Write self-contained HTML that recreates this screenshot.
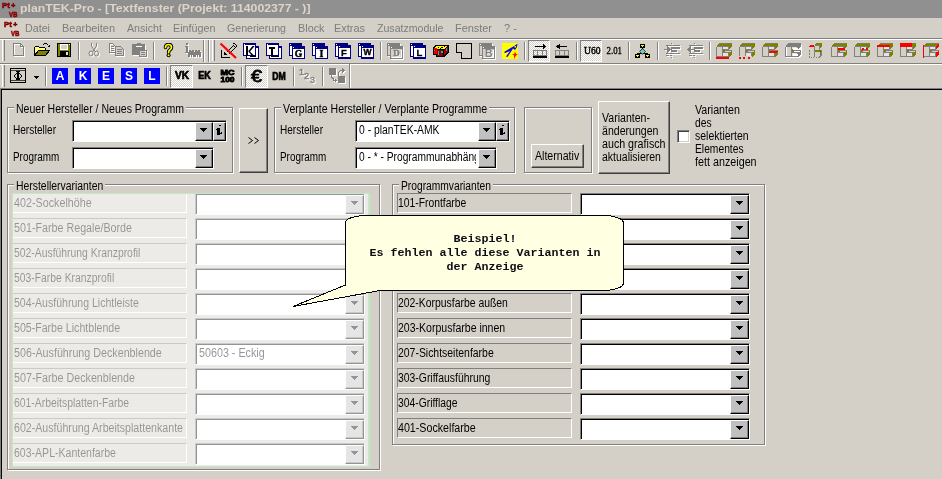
<!DOCTYPE html>
<html>
<head>
<meta charset="utf-8">
<title>planTEK-Pro</title>
<style>
*{box-sizing:border-box;margin:0;padding:0}
html,body{width:942px;height:479px;overflow:hidden;background:#d4d0c8}
body{position:relative;font-family:"Liberation Sans",sans-serif;font-size:12px;color:#000}
.a{position:absolute}
.t{position:absolute;white-space:nowrap;font-size:12px;line-height:14px;height:14px;transform-origin:0 0}
#title{left:0;top:0;width:942px;height:18px;background:#909090}
#title .tt{left:20px;top:1px;font-weight:bold;font-size:11px;line-height:15px;color:#ddd6c8;white-space:nowrap;transform-origin:0 0}
#menu{left:0;top:18px;width:942px;height:19px;background:#d4d0c8}
#menu span{position:absolute;top:3px;font-size:11px;line-height:14px;color:#7c7c7c;white-space:nowrap;transform-origin:0 0}
.hl{position:absolute;height:1px;left:0;width:942px}
.vs{position:absolute;width:2px;border-left:1px solid #808080;border-right:1px solid #fff}
.gb{position:absolute;border:1px solid #808080;box-shadow:1px 1px 0 #fff, inset 1px 1px 0 #fff}
.lg{position:absolute;background:#d4d0c8;white-space:nowrap;font-size:12px;line-height:14px;height:14px;padding:0 0 0 2px;overflow:hidden}
.lg span{display:inline-block;transform-origin:0 0;white-space:nowrap}
.cb{position:absolute;height:22px;background:#fff;border:1px solid;border-color:#808080 #fff #fff #808080;box-shadow:inset 1px 1px 0 #000}
.cb .dd{position:absolute;right:0;top:1px;width:18px;height:19px;background:#c0c0c0;border:1px solid;border-color:#fff #000 #000 #fff;border-width:1px 1px 1px 1px;box-shadow:inset -1px -1px 0 #808080}
.cb .dd:after{content:"";position:absolute;left:4px;top:5px;width:7px;height:4px;background:#000;clip-path:polygon(0 0,7px 0,7px 1px,6px 1px,6px 2px,5px 2px,5px 3px,4px 3px,4px 4px,3px 4px,3px 3px,2px 3px,2px 2px,1px 2px,1px 1px,0 1px)}
.cb .ib{position:absolute;right:0;top:1px;width:13px;height:19px;background:#c0c0c0;border:1px solid;border-color:#fff #000 #000 #fff;box-shadow:inset -1px -1px 0 #808080}
.cb .ib svg{position:absolute;left:1px;top:2px}
.cb.wi .dd{right:13px}
.cb.r .dd{width:19px}
.cb.r .dd:after{left:5px}
.cb:before{content:"";position:absolute;left:1px;right:0;top:0;height:1px;background:#000}
.cb .tx{position:absolute;left:3px;top:2px;font-size:12px;line-height:14px;white-space:nowrap;transform-origin:0 0}
.cb .clip{position:absolute;left:3px;top:2px;width:117px;height:14px;overflow:hidden}
.btn{position:absolute;background:#d4d0c8;border:1px solid;border-color:#fff #404040 #404040 #fff;box-shadow:inset -1px -1px 0 #808080}
.chk{width:13px;height:13px;background:#fff;border:1px solid;border-color:#808080 #fff #fff #808080;box-shadow:inset 1px 1px 0 #404040,inset -1px -1px 0 #d4d0c8}
.lb{position:absolute;height:20px;border:1px solid;border-color:#808080 #fff #fff #808080}
.lb span{position:absolute;left:0;top:2px;font-size:12px;line-height:14px;white-space:nowrap;transform-origin:0 0}
.lb.h span{left:1px}
#wash{position:absolute;left:12px;top:193px;width:358px;height:274px;background:rgba(255,255,255,.58);border:1px solid #c4e8c4;border-right-width:2px}
.co{position:absolute;left:346.5px;width:277px;text-align:center;font:bold 11.67px/14px "Liberation Mono",monospace;color:#0c0c14;white-space:nowrap}
.pb{position:absolute;border:1px solid;border-color:#808080 #fff #fff #808080;background:repeating-conic-gradient(#fff 0 25%,#d4d0c8 0 50%) 0 0/2px 2px}
.bl{position:absolute;width:16px;height:16px;background:#0000ff;color:#fff;font:bold 12px/16px "Liberation Sans",sans-serif;text-align:center}
#form,#menu,#title,#tb1,#tb2{will-change:transform}
</style>
</head>
<body>
<div id="title" class="a"><div class="tt a" id="tt" style="transform:scaleX(1.1138);">planTEK-Pro - [Textfenster (Projekt: 114002377 - )]</div></div>
<div id="menu" class="a"><span id="m0" style="left:25px;transform:scaleX(0.9732);">Datei</span><span id="m1" style="left:62px;transform:scaleX(0.9959);">Bearbeiten</span><span id="m2" style="left:127px;transform:scaleX(0.9673);">Ansicht</span><span id="m3" style="left:173px;transform:scaleX(0.9784);">Einfügen</span><span id="m4" style="left:227px;transform:scaleX(0.9647);">Generierung</span><span id="m5" style="left:298px;transform:scaleX(0.9849);">Block</span><span id="m6" style="left:334px;transform:scaleX(0.9940);">Extras</span><span id="m7" style="left:377px;transform:scaleX(0.9625);">Zusatzmodule</span><span id="m8" style="left:455px;transform:scaleX(0.9920);">Fenster</span><span id="m9" style="left:504px;">? -</span></div>
<svg class="a" style="left:1px;top:1px" width="18" height="17" viewBox="0 0 18 17"><g font-family="Liberation Sans" font-weight="bold" fill="#d80000" stroke="#700000" stroke-width="0.6"><text x="1" y="6.5" font-size="8" textLength="8" lengthAdjust="spacingAndGlyphs">Pt</text><text x="10.2" y="7" font-size="7">+</text><text x="8" y="15.5" font-size="8" textLength="8.5" lengthAdjust="spacingAndGlyphs">VB</text></g></svg>
<svg class="a" style="left:3px;top:20px" width="18" height="17" viewBox="0 0 18 17"><g font-family="Liberation Sans" font-weight="bold" fill="#d80000" stroke="#700000" stroke-width="0.6"><text x="1" y="6.5" font-size="8" textLength="8" lengthAdjust="spacingAndGlyphs">Pt</text><text x="10.2" y="7" font-size="7">+</text><text x="8" y="15.5" font-size="8" textLength="8.5" lengthAdjust="spacingAndGlyphs">VB</text></g></svg>
<div class="hl" style="top:38px;background:#808080"></div>
<div class="hl" style="top:39px;background:#fff"></div>
<div class="hl" style="top:63px;background:#808080"></div>
<div class="hl" style="top:64px;background:#fff"></div>
<div class="hl" style="top:88px;background:#808080"></div>
<div class="hl" style="top:89px;background:#000;left:1px"></div>
<div class="a" style="left:0;top:88px;width:1px;height:391px;background:#808080"></div>
<div class="a" style="left:1px;top:89px;width:1px;height:390px;background:#000"></div>
<div id="tb1" class="a" style="left:0;top:0;width:942px;height:0"><div class="a" style="left:2px;top:40px;width:3px;height:21px;border-left:1px solid #fff;border-right:1px solid #808080"></div>
<div class="vs" style="left:203px;top:40px;height:22px"></div>
<div class="vs" style="left:208px;top:40px;height:22px"></div>
<div class="a" style="left:212px;top:40px;width:3px;height:21px;border-left:1px solid #fff;border-right:1px solid #808080"></div>
<div class="vs" style="left:78px;top:42px;height:18px"></div>
<div class="vs" style="left:153px;top:42px;height:18px"></div>
<div class="vs" style="left:380px;top:42px;height:18px"></div>
<div class="vs" style="left:524px;top:42px;height:18px"></div>
<div class="vs" style="left:576px;top:42px;height:18px"></div>
<div class="vs" style="left:628px;top:42px;height:18px"></div>
<div class="vs" style="left:657px;top:42px;height:18px"></div>
<div class="vs" style="left:709px;top:42px;height:18px"></div>
<svg class="a" style="left:13px;top:43px" width="13" height="15" viewBox="0 0 13 15" shape-rendering="crispEdges"><g transform="translate(1,1)"><path d="M0.5 0.5H7.5L10.5 3.5V12.5H0.5ZM7.5 0.5V3.5H10.5" fill="none" stroke="#fff" stroke-width="1"/></g><path d="M0.5 0.5H7.5L10.5 3.5V12.5H0.5ZM7.5 0.5V3.5H10.5" fill="none" stroke="#808080" stroke-width="1"/></svg>
<svg class="a" style="left:34px;top:42px" width="17" height="15" viewBox="0 0 17 15" shape-rendering="crispEdges"><path d="M8.5 3.5L9.5 2.5L10.5 1.5H12.5L14.5 3.5" fill="none" stroke="#000" stroke-width="1"/><path d="M13 5H16V2Z" fill="#000"/><path d="M0.5 13.5V5.5L1.5 4.5H4.5L5.5 5.5H10.5L11.5 6.5V13.5Z" fill="#ffff80" stroke="#000" stroke-width="1"/><path d="M0.5 13.5L4.5 8.5H15.5L11.5 13.5Z" fill="#808000" stroke="#000" stroke-width="1"/></svg>
<svg class="a" style="left:57px;top:43px" width="14" height="14" viewBox="0 0 14 14" shape-rendering="crispEdges"><rect x="0" y="0" width="14" height="14" fill="#000"/><rect x="1" y="1" width="12" height="12" fill="#808000"/><rect x="3" y="1" width="8" height="6" fill="#fff"/><rect x="4" y="2" width="6" height="4" fill="#d4d0c8"/><rect x="12" y="1" width="1" height="1" fill="#fff"/><rect x="3" y="8" width="9" height="5" fill="#000"/><rect x="9" y="9" width="2" height="3" fill="#e0e0e0"/></svg>
<svg class="a" style="left:88px;top:43px" width="13" height="15" viewBox="0 0 13 15"><g transform="translate(1,1)"><path d="M3.5 0V3L7.5 9M8.5 0V3L4.5 9" fill="none" stroke="#fff" stroke-width="1"/><ellipse cx="3" cy="10.5" rx="2" ry="2.5" fill="none" stroke="#fff"/><ellipse cx="8.5" cy="10.5" rx="2" ry="2.5" fill="none" stroke="#fff"/></g><path d="M3.5 0V3L7.5 9M8.5 0V3L4.5 9" fill="none" stroke="#808080" stroke-width="1"/><ellipse cx="3" cy="10.5" rx="2" ry="2.5" fill="none" stroke="#808080"/><ellipse cx="8.5" cy="10.5" rx="2" ry="2.5" fill="none" stroke="#808080"/></svg>
<svg class="a" style="left:109px;top:43px" width="16" height="14" viewBox="0 0 16 14" shape-rendering="crispEdges"><g transform="translate(1,1)"><path d="M0.5 0.5H3.5L6.5 3.5V9.5H0.5Z" fill="none" stroke="#fff" stroke-width="1"/><rect x="2" y="3" width="3" height="1" fill="#fff"/><rect x="2" y="5" width="3" height="1" fill="#fff"/><rect x="2" y="7" width="3" height="1" fill="#fff"/><path d="M6.5 3.5H11.5L14.5 6.5V12.5H6.5Z" fill="none" stroke="#fff" stroke-width="1"/><rect x="8" y="6" width="5" height="1" fill="#fff"/><rect x="8" y="8" width="5" height="1" fill="#fff"/><rect x="8" y="10" width="5" height="1" fill="#fff"/></g><path d="M0.5 0.5H3.5L6.5 3.5V9.5H0.5Z" fill="none" stroke="#808080" stroke-width="1"/><rect x="2" y="3" width="3" height="1" fill="#808080"/><rect x="2" y="5" width="3" height="1" fill="#808080"/><rect x="2" y="7" width="3" height="1" fill="#808080"/><rect x="7" y="4" width="7" height="8" fill="#d4d0c8"/><path d="M6.5 3.5H11.5L14.5 6.5V12.5H6.5Z" fill="none" stroke="#808080" stroke-width="1"/><rect x="8" y="6" width="5" height="1" fill="#808080"/><rect x="8" y="8" width="5" height="1" fill="#808080"/><rect x="8" y="10" width="5" height="1" fill="#808080"/></svg>
<svg class="a" style="left:132px;top:43px" width="16" height="15" viewBox="0 0 16 15" shape-rendering="crispEdges"><rect x="1" y="2" width="13" height="11" fill="#fff"/><rect x="0" y="1" width="13" height="11" rx="1.5" fill="#808080"/><rect x="5" y="0" width="4" height="1" fill="#808080"/><rect x="4" y="3" width="6" height="1" fill="#fff"/><rect x="8" y="8" width="8" height="7" fill="#fff"/><rect x="7" y="7" width="8" height="7" fill="#808080"/><rect x="8" y="8" width="6" height="5" fill="#d4d0c8"/><rect x="9" y="9" width="4" height="1" fill="#808080"/><rect x="9" y="11" width="4" height="1" fill="#808080"/><rect x="13" y="8" width="1" height="1" fill="#fff"/></svg>
<svg class="a" style="left:163px;top:43px" width="12" height="15" viewBox="0 0 12 15"><path d="M2.5 4.5Q2.5 1.5 5.5 1.5Q8.5 1.5 8.5 4.2Q8.5 6 6.5 7.2Q5.6 7.9 5.6 9.6" fill="none" stroke="#000" stroke-width="3.6" stroke-linecap="round"/><circle cx="5.6" cy="12.3" r="2" fill="#000"/><path d="M2.5 4.5Q2.5 1.5 5.5 1.5Q8.5 1.5 8.5 4.2Q8.5 6 6.5 7.2Q5.6 7.9 5.6 9.6" fill="none" stroke="#ffff00" stroke-width="1.7" stroke-linecap="round"/><circle cx="5.6" cy="12.3" r="1.05" fill="#ffff00"/></svg>
<svg class="a" style="left:185px;top:43px" width="17" height="16" viewBox="0 0 17 16" shape-rendering="crispEdges"><g transform="translate(1,1)"><rect x="1" y="0" width="2" height="2" fill="#fff"/><rect x="0" y="3" width="3" height="1" fill="#fff"/><rect x="1" y="4" width="2" height="5" fill="#fff"/><rect x="0" y="9" width="4" height="1" fill="#fff"/><rect x="4" y="7" width="2" height="1" fill="#fff"/><rect x="7" y="7" width="2" height="1" fill="#fff"/><rect x="4" y="8" width="5" height="1" fill="#fff"/><rect x="3" y="9" width="7" height="3" fill="#fff"/><rect x="3" y="12" width="2" height="2" fill="#fff"/><rect x="6" y="12" width="1" height="2" fill="#fff"/><rect x="8" y="12" width="2" height="2" fill="#fff"/><rect x="10" y="7" width="2" height="1" fill="#fff"/><rect x="13" y="7" width="2" height="1" fill="#fff"/><rect x="10" y="8" width="5" height="1" fill="#fff"/><rect x="9" y="9" width="7" height="3" fill="#fff"/><rect x="9" y="12" width="2" height="2" fill="#fff"/><rect x="12" y="12" width="1" height="2" fill="#fff"/><rect x="14" y="12" width="2" height="2" fill="#fff"/></g><rect x="1" y="0" width="2" height="2" fill="#808080"/><rect x="0" y="3" width="3" height="1" fill="#808080"/><rect x="1" y="4" width="2" height="5" fill="#808080"/><rect x="0" y="9" width="4" height="1" fill="#808080"/><rect x="4" y="7" width="2" height="1" fill="#808080"/><rect x="7" y="7" width="2" height="1" fill="#808080"/><rect x="4" y="8" width="5" height="1" fill="#808080"/><rect x="3" y="9" width="7" height="3" fill="#808080"/><rect x="3" y="12" width="2" height="2" fill="#808080"/><rect x="6" y="12" width="1" height="2" fill="#808080"/><rect x="8" y="12" width="2" height="2" fill="#808080"/><rect x="10" y="7" width="2" height="1" fill="#808080"/><rect x="13" y="7" width="2" height="1" fill="#808080"/><rect x="10" y="8" width="5" height="1" fill="#808080"/><rect x="9" y="9" width="7" height="3" fill="#808080"/><rect x="9" y="12" width="2" height="2" fill="#808080"/><rect x="12" y="12" width="1" height="2" fill="#808080"/><rect x="14" y="12" width="2" height="2" fill="#808080"/></svg>
<svg class="a" style="left:219px;top:42px" width="19" height="18" viewBox="0 0 19 18" shape-rendering="crispEdges"><rect x="2" y="8" width="1" height="8" fill="#000"/><rect x="2" y="15" width="9" height="1" fill="#000"/><path d="M5 13V10L8 13Z" fill="#000"/><path d="M7.5 10.5L14.5 3.5L16.5 5.5L9.5 12.5M13.5 2.5L15 1L18 4L16.5 5.5" fill="none" stroke="#000" stroke-width="1"/><path d="M1.5 1.5L17 16" stroke="#ff0000" stroke-width="2.2" shape-rendering="auto"/></svg>
<svg class="a" style="left:243px;top:43px" width="16" height="16" viewBox="0 0 16 16"><rect shape-rendering="crispEdges" x="3" y="3" width="13" height="13" fill="#000080"/><rect shape-rendering="crispEdges" x="4" y="5" width="11" height="10" fill="#fff"/><rect shape-rendering="crispEdges" x="4" y="4" width="1" height="1" fill="#fff"/><rect shape-rendering="crispEdges" x="0" y="0" width="13" height="13" fill="#000080"/><rect shape-rendering="crispEdges" x="1" y="2" width="11" height="10" fill="#fff"/><rect shape-rendering="crispEdges" x="1" y="1" width="1" height="1" fill="#fff"/><path d="M3 3h2v10h-2zM5.2 8.2L9.5 3h2.2L7 8.6L12 13.5H9.6Z" fill="#000"/><rect shape-rendering="crispEdges" x="7" y="13" width="6" height="1" fill="#000"/></svg>
<svg class="a" style="left:266px;top:43px" width="16" height="16" viewBox="0 0 16 16"><rect shape-rendering="crispEdges" x="3" y="3" width="13" height="13" fill="#000080"/><rect shape-rendering="crispEdges" x="4" y="5" width="11" height="10" fill="#fff"/><rect shape-rendering="crispEdges" x="4" y="4" width="1" height="1" fill="#fff"/><rect shape-rendering="crispEdges" x="0" y="0" width="13" height="13" fill="#000080"/><rect shape-rendering="crispEdges" x="1" y="2" width="11" height="10" fill="#fff"/><rect shape-rendering="crispEdges" x="1" y="1" width="1" height="1" fill="#fff"/><rect shape-rendering="crispEdges" x="3" y="4" width="6" height="2" fill="#000"/><rect shape-rendering="crispEdges" x="5" y="4" width="2" height="10" fill="#000"/><rect shape-rendering="crispEdges" x="7" y="13" width="6" height="1" fill="#000"/></svg>
<svg class="a" style="left:289px;top:43px" width="16" height="16" viewBox="0 0 16 16"><rect shape-rendering="crispEdges" x="0" y="0" width="13" height="13" fill="#000080"/><rect shape-rendering="crispEdges" x="1" y="3" width="2" height="9" fill="#fff"/><rect shape-rendering="crispEdges" x="1" y="1" width="1" height="1" fill="#fff"/><rect shape-rendering="crispEdges" x="3" y="3" width="13" height="13" fill="#000080"/><rect shape-rendering="crispEdges" x="4" y="6" width="11" height="9" fill="#fff"/><rect shape-rendering="crispEdges" x="4" y="4" width="1" height="1" fill="#fff"/><text x="9.5" y="14" font-family="Liberation Serif" font-weight="bold" font-size="9.5" fill="#000" text-anchor="middle" stroke="#000" stroke-width="0.5">G</text></svg>
<svg class="a" style="left:312px;top:43px" width="16" height="16" viewBox="0 0 16 16"><rect shape-rendering="crispEdges" x="0" y="0" width="13" height="13" fill="#000080"/><rect shape-rendering="crispEdges" x="1" y="3" width="2" height="9" fill="#fff"/><rect shape-rendering="crispEdges" x="1" y="1" width="1" height="1" fill="#fff"/><rect shape-rendering="crispEdges" x="3" y="3" width="13" height="13" fill="#000080"/><rect shape-rendering="crispEdges" x="4" y="6" width="11" height="9" fill="#fff"/><rect shape-rendering="crispEdges" x="4" y="4" width="1" height="1" fill="#fff"/><text x="9.5" y="14.2" font-family="Liberation Serif" font-weight="bold" font-size="10" fill="#000" text-anchor="middle" stroke="#000" stroke-width="0.4">I</text></svg>
<svg class="a" style="left:335px;top:43px" width="16" height="16" viewBox="0 0 16 16"><rect shape-rendering="crispEdges" x="0" y="0" width="13" height="14" fill="#000080"/><rect shape-rendering="crispEdges" x="1" y="3" width="2" height="10" fill="#fff"/><rect shape-rendering="crispEdges" x="1" y="1" width="1" height="1" fill="#fff"/><rect shape-rendering="crispEdges" x="3" y="2" width="13" height="14" fill="#000080"/><rect shape-rendering="crispEdges" x="4" y="5" width="11" height="9" fill="#fff"/><rect shape-rendering="crispEdges" x="4" y="3" width="1" height="1" fill="#fff"/><text x="9" y="12.5" font-family="Liberation Sans" font-weight="bold" font-size="9.5" fill="#000" text-anchor="middle" stroke="#000" stroke-width="0.3">F</text></svg>
<svg class="a" style="left:358px;top:43px" width="16" height="16" viewBox="0 0 16 16"><rect shape-rendering="crispEdges" x="0" y="0" width="13" height="14" fill="#000080"/><rect shape-rendering="crispEdges" x="1" y="3" width="2" height="10" fill="#fff"/><rect shape-rendering="crispEdges" x="1" y="1" width="1" height="1" fill="#fff"/><rect shape-rendering="crispEdges" x="3" y="2" width="13" height="14" fill="#000080"/><rect shape-rendering="crispEdges" x="4" y="5" width="11" height="9" fill="#fff"/><rect shape-rendering="crispEdges" x="4" y="3" width="1" height="1" fill="#fff"/><text x="9.5" y="12.2" font-family="Liberation Sans" font-weight="bold" font-size="8.5" fill="#000" text-anchor="middle" stroke="#000" stroke-width="0.4">W</text></svg>
<svg class="a" style="left:387px;top:43px" width="17" height="17" viewBox="0 0 17 17"><g transform="translate(1,1)"><rect shape-rendering="crispEdges" x="0" y="0" width="13" height="13" fill="#fff"/><rect shape-rendering="crispEdges" x="3" y="3" width="13" height="13" fill="#fff"/></g><rect shape-rendering="crispEdges" x="0" y="0" width="13" height="13" fill="#808080"/><rect shape-rendering="crispEdges" x="1" y="3" width="2" height="9" fill="#d4d0c8"/><rect shape-rendering="crispEdges" x="3" y="3" width="13" height="13" fill="#808080"/><rect shape-rendering="crispEdges" x="4" y="6" width="11" height="9" fill="#d4d0c8"/><rect shape-rendering="crispEdges" x="1" y="1" width="1" height="1" fill="#fff"/><rect shape-rendering="crispEdges" x="4" y="4" width="1" height="1" fill="#fff"/><rect shape-rendering="crispEdges" x="5" y="7" width="10" height="8" fill="#fff"/><rect shape-rendering="crispEdges" x="4" y="6" width="10" height="8" fill="#d4d0c8"/><text x="10.3" y="13.8" font-family="Liberation Serif" font-weight="bold" font-size="9" fill="#fff" text-anchor="middle">D</text><text x="9.5" y="13" font-family="Liberation Serif" font-weight="bold" font-size="9" fill="#808080" text-anchor="middle" stroke="#808080" stroke-width="0.4">D</text></svg>
<svg class="a" style="left:410px;top:43px" width="16" height="16" viewBox="0 0 16 16"><rect shape-rendering="crispEdges" x="0" y="0" width="13" height="14" fill="#000080"/><rect shape-rendering="crispEdges" x="1" y="3" width="2" height="10" fill="#fff"/><rect shape-rendering="crispEdges" x="1" y="1" width="1" height="1" fill="#fff"/><rect shape-rendering="crispEdges" x="3" y="2" width="13" height="14" fill="#000080"/><rect shape-rendering="crispEdges" x="4" y="5" width="11" height="9" fill="#fff"/><rect shape-rendering="crispEdges" x="4" y="3" width="1" height="1" fill="#fff"/><text x="9.5" y="12.5" font-family="Liberation Sans" font-weight="bold" font-size="9.5" fill="#000" text-anchor="middle" stroke="#000" stroke-width="0.3">L</text></svg>
<svg class="a" style="left:432px;top:44px" width="17" height="14" viewBox="0 0 17 14" shape-rendering="crispEdges"><path d="M3 1H17V8L12 13H4V11H1V3Z" fill="#000"/><path d="M4 2H15L12 5H2Z" fill="#ffff00"/><rect x="6" y="3" width="1" height="1" fill="#000"/><rect x="9" y="3" width="2" height="1" fill="#000"/><rect x="12" y="2" width="1" height="1" fill="#000"/><rect x="8" y="4" width="1" height="1" fill="#000"/><rect x="2" y="4" width="3" height="6" fill="#ff0000"/><rect x="2" y="6" width="1" height="1" fill="#00c0c0"/><rect x="3" y="5" width="1" height="2" fill="#900"/><rect x="3" y="8" width="1" height="1" fill="#900"/><rect x="5" y="6" width="6" height="6" fill="#900000"/><rect x="6" y="7" width="1" height="4" fill="#00c0c0"/><rect x="9" y="7" width="2" height="2" fill="#00c0c0"/><path d="M12 6L16 2V7L12 11Z" fill="#a00000"/><rect x="14" y="4" width="1" height="3" fill="#00c0c0"/></svg>
<svg class="a" style="left:456px;top:43px" width="16" height="16" viewBox="0 0 16 16" shape-rendering="crispEdges"><path d="M0.5 0.5H15.5V15.5H5.5V9.5H0.5Z" fill="none" stroke="#000" stroke-width="1"/></svg>
<svg class="a" style="left:479px;top:43px" width="17" height="17" viewBox="0 0 17 17"><g transform="translate(1,1)"><rect shape-rendering="crispEdges" x="0" y="0" width="13" height="13" fill="#fff"/><rect shape-rendering="crispEdges" x="3" y="3" width="13" height="13" fill="#fff"/></g><rect shape-rendering="crispEdges" x="0" y="0" width="13" height="13" fill="#808080"/><rect shape-rendering="crispEdges" x="1" y="3" width="2" height="9" fill="#d4d0c8"/><rect shape-rendering="crispEdges" x="3" y="3" width="13" height="13" fill="#808080"/><rect shape-rendering="crispEdges" x="4" y="6" width="11" height="9" fill="#d4d0c8"/><rect shape-rendering="crispEdges" x="1" y="1" width="1" height="1" fill="#fff"/><rect shape-rendering="crispEdges" x="4" y="4" width="1" height="1" fill="#fff"/><rect shape-rendering="crispEdges" x="5" y="7" width="10" height="8" fill="#fff"/><rect shape-rendering="crispEdges" x="4" y="6" width="10" height="8" fill="#d4d0c8"/><text x="10.5" y="14.8" font-family="Liberation Sans" font-weight="bold" font-size="10.5" fill="#fff" text-anchor="middle">B</text><text x="9.7" y="14" font-family="Liberation Sans" font-weight="bold" font-size="10.5" fill="#808080" text-anchor="middle">B</text></svg>
<svg class="a" style="left:502px;top:43px" width="16" height="16" viewBox="0 0 16 16" shape-rendering="crispEdges"><rect x="0" y="0" width="16" height="16" fill="#ffff00"/><g shape-rendering="auto"><path d="M15.5 0.5L13 2.5L2 9L3 10L8 8L4 13.5L5.5 14L11 5.5L13 7L15 4Z" fill="#0000ff"/><rect x="12.5" y="3" width="1.5" height="1.5" fill="#ffff00"/><path d="M13 8.5L14 11L16 11.5L14 12.5L12 16L12.2 12.5L10 11.5L12.2 11Z" fill="#ff0000"/></g></svg>
<div class="pb" style="left:528px;top:40px;width:22px;height:22px"></div>
<svg class="a" style="left:528px;top:40px" width="22" height="22" viewBox="0 0 22 22" shape-rendering="crispEdges"><path d="M5.5 10.5H18.5V15.5H5.5ZM9.5 10.5V15.5M14.5 10.5V15.5" fill="none" stroke="#808080" stroke-width="1"/><rect x="5" y="16" width="14" height="2" fill="#000"/><rect x="7" y="6" width="11" height="1" fill="#000"/><path d="M15 4L18.5 6.5L15 9Z" fill="#000"/></svg>
<svg class="a" style="left:550px;top:40px" width="22" height="22" viewBox="0 0 22 22" shape-rendering="crispEdges"><path d="M5.5 10.5H18.5V15.5H5.5ZM9.5 10.5V15.5M14.5 10.5V15.5" fill="none" stroke="#808080" stroke-width="1"/><rect x="5" y="16" width="14" height="2" fill="#000"/><rect x="6" y="6" width="11" height="1" fill="#000"/><path d="M9.5 4L6 6.5L9.5 9Z" fill="#000"/></svg>
<div class="pb" style="left:580px;top:40px;width:22px;height:22px"></div>
<svg class="a" style="left:580px;top:40px" width="46" height="22" viewBox="0 0 46 22"><text x="4" y="13.6" font-family="Liberation Serif" font-weight="normal" font-size="10.5" fill="#000" text-anchor="start" stroke="#000" stroke-width="0.45" textLength="16.5" lengthAdjust="spacingAndGlyphs">U60</text><text x="26.5" y="13.6" font-family="Liberation Serif" font-weight="normal" font-size="10.5" fill="#000" text-anchor="start" stroke="#000" stroke-width="0.3" textLength="15.5" lengthAdjust="spacingAndGlyphs">2.01</text></svg>
<svg class="a" style="left:635px;top:44px" width="16" height="14" viewBox="0 0 16 14" shape-rendering="crispEdges"><rect x="5" y="0" width="5" height="4" fill="#000"/><rect x="6" y="1" width="3" height="2" fill="#ffff00"/><rect x="6" y="2" width="1" height="1" fill="#000"/><rect x="8" y="2" width="1" height="1" fill="#000"/><rect x="0" y="10" width="5" height="4" fill="#000"/><rect x="1" y="11" width="3" height="2" fill="#ffff00"/><rect x="1" y="12" width="1" height="1" fill="#000"/><rect x="3" y="12" width="1" height="1" fill="#000"/><rect x="10" y="10" width="5" height="4" fill="#000"/><rect x="11" y="11" width="3" height="2" fill="#ffff00"/><rect x="11" y="12" width="1" height="1" fill="#000"/><rect x="13" y="12" width="1" height="1" fill="#000"/><path d="M7.5 4V5M7.5 9.5L2.5 9.5V10M7.5 9.5H12.5V10" fill="none" stroke="#000" stroke-width="1"/><path d="M7.5 4.8L10.2 7.5L7.5 10.2L4.8 7.5Z" fill="#e8ffff" stroke="#000" stroke-width="1" shape-rendering="auto"/><path d="M7.5 6L9 7.5L7.5 9L6 7.5Z" fill="#00e8e8" shape-rendering="auto"/></svg>
<svg class="a" style="left:664px;top:43px" width="18" height="17" viewBox="0 0 18 17" shape-rendering="crispEdges"><g transform="translate(1,1)"><rect x="2" y="2" width="14" height="1" fill="#fff"/><rect x="7" y="4" width="9" height="2" fill="#fff"/><rect x="7" y="7" width="6" height="2" fill="#fff"/><rect x="2" y="10" width="14" height="1" fill="#fff"/><rect x="2" y="12" width="3" height="1" fill="#fff"/><rect x="6" y="12" width="2" height="1" fill="#fff"/><rect x="7" y="0" width="1" height="1" fill="#fff"/><rect x="7" y="2" width="1" height="1" fill="#fff"/><rect x="7" y="4" width="1" height="1" fill="#fff"/><rect x="7" y="6" width="1" height="1" fill="#fff"/><rect x="7" y="8" width="1" height="1" fill="#fff"/><rect x="7" y="10" width="1" height="1" fill="#fff"/><rect x="7" y="12" width="1" height="1" fill="#fff"/><rect x="7" y="14" width="1" height="1" fill="#fff"/><rect x="0" y="6" width="7" height="1" fill="#fff"/><path d="M3 3L7 6.5L3 10Z" fill="#fff"/></g><rect x="2" y="2" width="14" height="1" fill="#808080"/><rect x="7" y="4" width="9" height="2" fill="#808080"/><rect x="7" y="7" width="6" height="2" fill="#808080"/><rect x="2" y="10" width="14" height="1" fill="#808080"/><rect x="2" y="12" width="3" height="1" fill="#808080"/><rect x="6" y="12" width="2" height="1" fill="#808080"/><rect x="7" y="0" width="1" height="1" fill="#808080"/><rect x="7" y="2" width="1" height="1" fill="#808080"/><rect x="7" y="4" width="1" height="1" fill="#808080"/><rect x="7" y="6" width="1" height="1" fill="#808080"/><rect x="7" y="8" width="1" height="1" fill="#808080"/><rect x="7" y="10" width="1" height="1" fill="#808080"/><rect x="7" y="12" width="1" height="1" fill="#808080"/><rect x="7" y="14" width="1" height="1" fill="#808080"/><rect x="0" y="6" width="7" height="1" fill="#808080"/><path d="M3 3L7 6.5L3 10Z" fill="#808080"/></svg>
<svg class="a" style="left:687px;top:43px" width="18" height="17" viewBox="0 0 18 17" shape-rendering="crispEdges"><g transform="translate(1,1)"><rect x="2" y="2" width="14" height="1" fill="#fff"/><rect x="7" y="4" width="9" height="2" fill="#fff"/><rect x="7" y="7" width="6" height="2" fill="#fff"/><rect x="2" y="10" width="14" height="1" fill="#fff"/><rect x="2" y="12" width="3" height="1" fill="#fff"/><rect x="6" y="12" width="2" height="1" fill="#fff"/><rect x="7" y="0" width="1" height="1" fill="#fff"/><rect x="7" y="2" width="1" height="1" fill="#fff"/><rect x="7" y="4" width="1" height="1" fill="#fff"/><rect x="7" y="6" width="1" height="1" fill="#fff"/><rect x="7" y="8" width="1" height="1" fill="#fff"/><rect x="7" y="10" width="1" height="1" fill="#fff"/><rect x="7" y="12" width="1" height="1" fill="#fff"/><rect x="7" y="14" width="1" height="1" fill="#fff"/><rect x="1" y="6" width="6" height="1" fill="#fff"/><path d="M4 3L0 6.5L4 10Z" fill="#fff"/></g><rect x="2" y="2" width="14" height="1" fill="#808080"/><rect x="7" y="4" width="9" height="2" fill="#808080"/><rect x="7" y="7" width="6" height="2" fill="#808080"/><rect x="2" y="10" width="14" height="1" fill="#808080"/><rect x="2" y="12" width="3" height="1" fill="#808080"/><rect x="6" y="12" width="2" height="1" fill="#808080"/><rect x="7" y="0" width="1" height="1" fill="#808080"/><rect x="7" y="2" width="1" height="1" fill="#808080"/><rect x="7" y="4" width="1" height="1" fill="#808080"/><rect x="7" y="6" width="1" height="1" fill="#808080"/><rect x="7" y="8" width="1" height="1" fill="#808080"/><rect x="7" y="10" width="1" height="1" fill="#808080"/><rect x="7" y="12" width="1" height="1" fill="#808080"/><rect x="7" y="14" width="1" height="1" fill="#808080"/><rect x="1" y="6" width="6" height="1" fill="#808080"/><path d="M4 3L0 6.5L4 10Z" fill="#808080"/></svg>
<svg class="a" style="left:716px;top:43px" width="16" height="16" viewBox="0 0 16 16" shape-rendering="crispEdges"><path d="M3 0H16L13 3H0Z" fill="#808000"/><path d="M13 3L16 0V3L13 6Z" fill="#808000"/><path d="M13 9.5L16 7.5V11L13 14Z" fill="#808000"/><rect x="7" y="7" width="2" height="2" fill="#808000"/><rect x="7" y="4" width="5" height="2" fill="#e6e4de"/><rect x="7" y="10" width="5" height="3" fill="#e6e4de"/><path d="M0.5 3.5H12.5V6.5H6.5M6.5 3.5V13.5M0.5 3.5V13.5H12.5V9.5H7M9 7.5H15.5" fill="none" stroke="#808080" stroke-width="1"/><path d="M3 0.5H16M6 3L9 0" fill="none" stroke="#808080" stroke-width="0.6"/><rect x="0" y="14" width="13" height="2" fill="#ff0000"/></svg>
<svg class="a" style="left:739px;top:43px" width="16" height="16" viewBox="0 0 16 16" shape-rendering="crispEdges"><path d="M3 0H16L13 3H0Z" fill="#808000"/><path d="M13 3L16 0V3L13 6Z" fill="#808000"/><path d="M13 9.5L16 7.5V11L13 14Z" fill="#808000"/><rect x="7" y="7" width="2" height="2" fill="#808000"/><rect x="7" y="4" width="5" height="2" fill="#e6e4de"/><rect x="7" y="10" width="5" height="3" fill="#e6e4de"/><path d="M0.5 3.5H12.5V6.5H6.5M6.5 3.5V13.5M0.5 3.5V13.5H12.5V9.5H7M9 7.5H15.5" fill="none" stroke="#808080" stroke-width="1"/><path d="M3 0.5H16M6 3L9 0" fill="none" stroke="#808080" stroke-width="0.6"/><rect x="0" y="13" width="13" height="1" fill="#d4d0c8"/><rect x="0" y="14" width="2" height="2" fill="#ff0000"/><rect x="4" y="14" width="2" height="2" fill="#ff0000"/><rect x="9" y="14" width="2" height="2" fill="#ff0000"/></svg>
<svg class="a" style="left:762px;top:43px" width="16" height="16" viewBox="0 0 16 16" shape-rendering="crispEdges"><path d="M3 0H16L13 3H0Z" fill="#808000"/><path d="M13 3L16 0V3L13 6Z" fill="#808000"/><path d="M13 9.5L16 7.5V11L13 14Z" fill="#808000"/><rect x="7" y="7" width="2" height="2" fill="#808000"/><rect x="7" y="4" width="5" height="2" fill="#e6e4de"/><rect x="7" y="10" width="5" height="3" fill="#e6e4de"/><path d="M0.5 3.5H12.5V6.5H6.5M6.5 3.5V13.5M0.5 3.5V13.5H12.5V9.5H7M9 7.5H15.5" fill="none" stroke="#808080" stroke-width="1"/><path d="M3 0.5H16M6 3L9 0" fill="none" stroke="#808080" stroke-width="0.6"/><path d="M8 8H16L14 10H7Z" fill="#ff0000"/></svg>
<svg class="a" style="left:785px;top:43px" width="17" height="17" viewBox="0 0 17 17" shape-rendering="crispEdges"><g transform="translate(1,1)"><path d="M0 3H13V14H0ZM13 3L16 0V11L13 14Z" fill="#fff"/></g><rect x="1" y="4" width="5" height="9" fill="#d4d0c8"/><path d="M3 0H16L13 3H0Z" fill="#808080"/><path d="M13 3L16 0V3L13 6Z" fill="#808080"/><path d="M13 9.5L16 7.5V11L13 14Z" fill="#808080"/><rect x="7" y="7" width="2" height="2" fill="#808000"/><rect x="7" y="4" width="5" height="2" fill="#e6e4de"/><rect x="7" y="10" width="5" height="3" fill="#e6e4de"/><path d="M0.5 3.5H12.5V6.5H6.5M6.5 3.5V13.5M0.5 3.5V13.5H12.5V9.5H7M9 7.5H15.5" fill="none" stroke="#808080" stroke-width="1"/><path d="M3 0.5H16M6 3L9 0" fill="none" stroke="#808080" stroke-width="0.6"/><rect x="8" y="5" width="5" height="2" fill="#fff"/><rect x="8" y="11" width="5" height="2" fill="#fff"/><rect x="1" y="4" width="1" height="9" fill="#fff"/></svg>
<svg class="a" style="left:808px;top:43px" width="16" height="16" viewBox="0 0 16 16" shape-rendering="crispEdges"><path d="M2 2H6V4H0Z" fill="#ff0000"/><path d="M8 0H14L13 2H7Z" fill="#808000"/><path d="M12 2L14 0V4L12 5Z" fill="#808000"/><rect x="7" y="7" width="6" height="2" fill="#808000"/><rect x="12" y="9" width="1" height="4" fill="#808000"/><rect x="12" y="8" width="1" height="1" fill="#008000"/><path d="M6.5 2.5H11.5V6.5M6.5 2.5V14M13.5 7V12L11 14.5" fill="none" stroke="#808080" stroke-width="1"/><rect x="1" y="7" width="1" height="1" fill="#808080"/><rect x="1" y="8" width="1" height="1" fill="#808080"/><rect x="1" y="10" width="1" height="1" fill="#808080"/><rect x="1" y="11" width="1" height="1" fill="#808080"/><rect x="1" y="13" width="1" height="1" fill="#808080"/><rect x="1" y="14" width="1" height="1" fill="#808080"/><rect x="3" y="14" width="1" height="1" fill="#808080"/><rect x="5" y="14" width="1" height="1" fill="#808080"/><rect x="8" y="14" width="1" height="1" fill="#808080"/><rect x="10" y="14" width="1" height="1" fill="#808080"/></svg>
<svg class="a" style="left:831px;top:43px" width="16" height="16" viewBox="0 0 16 16" shape-rendering="crispEdges"><path d="M3 0H16L13 3H0Z" fill="#808000"/><path d="M13 3L16 0V3L13 6Z" fill="#808000"/><path d="M13 9.5L16 7.5V11L13 14Z" fill="#808000"/><rect x="7" y="7" width="2" height="2" fill="#808000"/><rect x="7" y="4" width="5" height="2" fill="#e6e4de"/><rect x="7" y="10" width="5" height="3" fill="#e6e4de"/><path d="M0.5 3.5H12.5V6.5H6.5M6.5 3.5V13.5M0.5 3.5V13.5H12.5V9.5H7M9 7.5H15.5" fill="none" stroke="#808080" stroke-width="1"/><path d="M3 0.5H16M6 3L9 0" fill="none" stroke="#808080" stroke-width="0.6"/><rect x="7" y="5" width="7" height="2" fill="#ff0000"/></svg>
<svg class="a" style="left:854px;top:43px" width="16" height="16" viewBox="0 0 16 16" shape-rendering="crispEdges"><path d="M3 0H16L13 3H0Z" fill="#808000"/><path d="M13 3L16 0V3L13 6Z" fill="#808000"/><path d="M13 9.5L16 7.5V11L13 14Z" fill="#808000"/><rect x="7" y="7" width="2" height="2" fill="#808000"/><rect x="7" y="4" width="5" height="2" fill="#e6e4de"/><rect x="7" y="10" width="5" height="3" fill="#e6e4de"/><path d="M0.5 3.5H12.5V6.5H6.5M6.5 3.5V13.5M0.5 3.5V13.5H12.5V9.5H7M9 7.5H15.5" fill="none" stroke="#808080" stroke-width="1"/><path d="M3 0.5H16M6 3L9 0" fill="none" stroke="#808080" stroke-width="0.6"/><rect x="8" y="5" width="2" height="2" fill="#ff0000"/><rect x="12" y="5" width="2" height="2" fill="#ff0000"/></svg>
<svg class="a" style="left:877px;top:43px" width="16" height="16" viewBox="0 0 16 16" shape-rendering="crispEdges"><path d="M3 0H16L13 3H0Z" fill="#808000"/><path d="M13 3L16 0V3L13 6Z" fill="#808000"/><path d="M13 9.5L16 7.5V11L13 14Z" fill="#808000"/><rect x="7" y="7" width="2" height="2" fill="#808000"/><rect x="7" y="4" width="5" height="2" fill="#e6e4de"/><rect x="7" y="10" width="5" height="3" fill="#e6e4de"/><path d="M0.5 3.5H12.5V6.5H6.5M6.5 3.5V13.5M0.5 3.5V13.5H12.5V9.5H7M9 7.5H15.5" fill="none" stroke="#808080" stroke-width="1"/><path d="M3 0.5H16M6 3L9 0" fill="none" stroke="#808080" stroke-width="0.6"/><rect x="0" y="2" width="13" height="2" fill="#ff0000"/></svg>
<svg class="a" style="left:900px;top:43px" width="16" height="16" viewBox="0 0 16 16" shape-rendering="crispEdges"><path d="M3 0H16L13 3H0Z" fill="#808000"/><path d="M13 3L16 0V3L13 6Z" fill="#808000"/><path d="M13 9.5L16 7.5V11L13 14Z" fill="#808000"/><rect x="7" y="7" width="2" height="2" fill="#808000"/><rect x="7" y="4" width="5" height="2" fill="#e6e4de"/><rect x="7" y="10" width="5" height="3" fill="#e6e4de"/><path d="M0.5 3.5H12.5V6.5H6.5M6.5 3.5V13.5M0.5 3.5V13.5H12.5V9.5H7M9 7.5H15.5" fill="none" stroke="#808080" stroke-width="1"/><path d="M3 0.5H16M6 3L9 0" fill="none" stroke="#808080" stroke-width="0.6"/><rect x="0" y="0" width="12" height="4" fill="#ff0000"/></svg>
<svg class="a" style="left:923px;top:43px" width="16" height="16" viewBox="0 0 16 16" shape-rendering="crispEdges"><path d="M3 0H16L13 3H0Z" fill="#808000"/><path d="M13 3L16 0V3L13 6Z" fill="#ff0000"/><path d="M13 9.5L16 7.5V11L13 14Z" fill="#ff0000"/><rect x="7" y="7" width="2" height="2" fill="#808000"/><rect x="7" y="4" width="5" height="2" fill="#e6e4de"/><rect x="7" y="10" width="5" height="3" fill="#e6e4de"/><path d="M0.5 3.5H12.5V6.5H6.5M6.5 3.5V13.5M0.5 3.5V13.5H12.5V9.5H7M9 7.5H15.5" fill="none" stroke="#808080" stroke-width="1"/><path d="M3 0.5H16M6 3L9 0" fill="none" stroke="#808080" stroke-width="0.6"/><rect x="0" y="2" width="1" height="13" fill="#ff0000"/></svg>
</div>
<div id="tb2" class="a" style="left:0;top:0;width:942px;height:0"><div class="a" style="left:2px;top:65px;width:3px;height:22px;border-left:1px solid #fff;border-right:1px solid #808080"></div>
<div class="vs" style="left:45px;top:67px;height:19px"></div>
<div class="vs" style="left:166px;top:67px;height:19px"></div>
<div class="vs" style="left:241px;top:67px;height:19px"></div>
<div class="vs" style="left:293px;top:67px;height:19px"></div>
<div class="vs" style="left:322px;top:67px;height:19px"></div>
<div class="vs" style="left:349px;top:64px;height:24px"></div>
<svg class="a" style="left:10px;top:68px" width="16" height="15" viewBox="0 0 16 15" shape-rendering="crispEdges"><path d="M0.5 0.5H15.5V14.5H0.5Z" fill="none" stroke="#000" stroke-width="1"/><rect x="0" y="0" width="16" height="1" fill="#000"/><rect x="0" y="14" width="16" height="1" fill="#000"/><rect x="0" y="0" width="1" height="15" fill="#000"/><rect x="15" y="0" width="1" height="15" fill="#000"/><rect x="1" y="2" width="14" height="1" fill="#404040"/><rect x="1" y="12" width="14" height="1" fill="#404040"/><rect x="7" y="3" width="2" height="9" fill="#000"/><rect x="6" y="3" width="4" height="1" fill="#000"/><rect x="6" y="11" width="4" height="1" fill="#000"/><rect x="6" y="5" width="1" height="1" fill="#000"/><rect x="5" y="6" width="1" height="1" fill="#000"/><rect x="4" y="7" width="1" height="1" fill="#000"/><rect x="4" y="8" width="1" height="1" fill="#000"/><rect x="5" y="9" width="1" height="1" fill="#000"/><rect x="6" y="10" width="1" height="1" fill="#000"/><rect x="9" y="5" width="1" height="1" fill="#000"/><rect x="10" y="6" width="1" height="1" fill="#000"/><rect x="11" y="7" width="1" height="1" fill="#000"/><rect x="11" y="8" width="1" height="1" fill="#000"/><rect x="10" y="9" width="1" height="1" fill="#000"/><rect x="9" y="10" width="1" height="1" fill="#000"/></svg>
<svg class="a" style="left:34px;top:76px" width="5" height="3" viewBox="0 0 5 3" shape-rendering="crispEdges"><rect x="0" y="0" width="5" height="1" fill="#000"/><rect x="1" y="1" width="3" height="1" fill="#000"/><rect x="2" y="2" width="1" height="1" fill="#000"/></svg>
<div class="bl" style="left:52px;top:68px">A</div>
<div class="bl" style="left:75px;top:68px">K</div>
<div class="bl" style="left:98px;top:68px">E</div>
<div class="bl" style="left:121px;top:68px">S</div>
<div class="bl" style="left:144px;top:68px">L</div>
<div class="pb" style="left:170px;top:65px;width:23px;height:23px"></div>
<div class="pb" style="left:245px;top:65px;width:23px;height:23px"></div>
<svg class="a" style="left:170px;top:65px" width="120" height="22" viewBox="0 0 120 22"><text x="12" y="14" font-family="Liberation Sans" font-weight="bold" font-size="10.5" fill="#000" text-anchor="middle" stroke="#000" stroke-width="0.7" textLength="14" lengthAdjust="spacingAndGlyphs">VK</text><text x="34.5" y="14" font-family="Liberation Sans" font-weight="bold" font-size="10.5" fill="#000" text-anchor="middle" stroke="#000" stroke-width="0.7" textLength="12.5" lengthAdjust="spacingAndGlyphs">EK</text><text x="57.5" y="10" font-family="Liberation Sans" font-weight="bold" font-size="8" fill="#000" text-anchor="middle" stroke="#000" stroke-width="0.9" textLength="14" lengthAdjust="spacingAndGlyphs">MC</text><text x="57.5" y="17" font-family="Liberation Sans" font-weight="bold" font-size="8" fill="#000" text-anchor="middle" stroke="#000" stroke-width="0.9" textLength="14" lengthAdjust="spacingAndGlyphs">100</text><text x="86.5" y="16.5" font-family="Liberation Sans" font-weight="normal" font-size="16.5" fill="#000" text-anchor="middle" stroke="#000" stroke-width="0.8" textLength="11" lengthAdjust="spacingAndGlyphs">€</text><text x="109" y="15" font-family="Liberation Sans" font-weight="bold" font-size="10.5" fill="#000" text-anchor="middle" stroke="#000" stroke-width="0.7" textLength="13.5" lengthAdjust="spacingAndGlyphs">DM</text></svg>
<svg class="a" style="left:299px;top:67px" width="20" height="19" viewBox="0 0 20 19"><g transform="translate(1,1)"><text x="0" y="7.5" font-family="Liberation Sans" font-weight="normal" font-size="9" fill="#fff" text-anchor="start" stroke="#fff" stroke-width="0.5">1</text><text x="5" y="12" font-family="Liberation Sans" font-weight="normal" font-size="9" fill="#fff" text-anchor="start" stroke="#fff" stroke-width="0.5">2</text><text x="11" y="16" font-family="Liberation Sans" font-weight="normal" font-size="9" fill="#fff" text-anchor="start" stroke="#fff" stroke-width="0.3">3</text></g><text x="0" y="7.5" font-family="Liberation Sans" font-weight="normal" font-size="9" fill="#808080" text-anchor="start" stroke="#808080" stroke-width="0.5">1</text><text x="5" y="12" font-family="Liberation Sans" font-weight="normal" font-size="9" fill="#808080" text-anchor="start" stroke="#808080" stroke-width="0.5">2</text><text x="11" y="16" font-family="Liberation Sans" font-weight="normal" font-size="9" fill="#808080" text-anchor="start" stroke="#808080" stroke-width="0.3">3</text></svg>
<svg class="a" style="left:329px;top:68px" width="18" height="17" viewBox="0 0 18 17" shape-rendering="crispEdges"><g transform="translate(1,1)"><rect x="0" y="0" width="7" height="7" fill="#fff"/><rect x="9" y="8" width="7" height="7" fill="#fff"/><path d="M2.5 7V9.5L4.5 10.5V12.5H6" fill="none" stroke="#fff" stroke-width="1"/><path d="M6 10.5L8 12.5L6 14.5Z" fill="#fff"/><path d="M9.5 8V4.5L11.5 2.5H13.5" fill="none" stroke="#fff" stroke-width="1"/><path d="M13 0L16 2.5L13 5Z" fill="#fff"/></g><rect x="0" y="0" width="7" height="7" fill="#808080"/><rect x="9" y="8" width="7" height="7" fill="#808080"/><path d="M2.5 7V9.5L4.5 10.5V12.5H6" fill="none" stroke="#808080" stroke-width="1"/><path d="M6 10.5L8 12.5L6 14.5Z" fill="#808080"/><path d="M9.5 8V4.5L11.5 2.5H13.5" fill="none" stroke="#808080" stroke-width="1"/><path d="M13 0L16 2.5L13 5Z" fill="#808080"/></svg>
</div>
<div id="form" class="a" style="left:0;top:0;width:942px;height:479px">
<div class="gb" style="left:7px;top:107px;width:226px;height:66px"></div>
<div class="lg" style="left:14px;top:102px;width:172px"><span id="l1" style="transform:scaleX(0.8777);">Neuer Hersteller / Neues Programm</span></div>
<div class="t" id="h1" style="left:13px;top:123px;transform:scaleX(0.8372);">Hersteller</div>
<div class="t" id="p1" style="left:13px;top:150px;transform:scaleX(0.8248);">Programm</div>
<div class="cb wi" style="left:72px;top:120px;width:155px"><div class="dd"></div><div class="ib"><svg width="8" height="12" viewBox="0 0 8 12" shape-rendering="crispEdges"><path d="M4 0h2v1h-2zM2 3h3v1h-3zM1 4h4v1h-4zM2 5h3v1h-3zM2 6h3v1h-3zM2 7h3v1h-3zM6 7h1v1h-1zM2 8h5v1h-5zM2 9h3v1h-3z" fill="#000"/></svg></div></div>
<div class="cb" style="left:72px;top:147px;width:142px"><div class="dd"></div></div>
<div class="btn" style="left:239px;top:108px;width:29px;height:65px"><svg class="a" style="left:8px;top:28px" width="12" height="8" viewBox="0 0 12 8"><path d="M0.5 0.5L4.5 3.5L0.5 6.5M6.5 0.5L10.5 3.5L6.5 6.5" fill="none" stroke="#000" stroke-width="1"/></svg></div>
<div class="gb" style="left:274px;top:107px;width:241px;height:66px"></div>
<div class="lg" style="left:281px;top:102px;width:208px"><span id="l3" style="transform:scaleX(0.8793);">Verplante Hersteller / Verplante Programme</span></div>
<div class="t" id="h2" style="left:280px;top:123px;transform:scaleX(0.8372);">Hersteller</div>
<div class="t" id="p2" style="left:280px;top:150px;transform:scaleX(0.8248);">Programm</div>
<div class="cb wi" style="left:355px;top:120px;width:155px"><div class="tx" id="c3" style="transform:scaleX(0.8621);">0 - planTEK-AMK</div><div class="dd"></div><div class="ib"><svg width="8" height="12" viewBox="0 0 8 12" shape-rendering="crispEdges"><path d="M4 0h2v1h-2zM2 3h3v1h-3zM1 4h4v1h-4zM2 5h3v1h-3zM2 6h3v1h-3zM2 7h3v1h-3zM6 7h1v1h-1zM2 8h5v1h-5zM2 9h3v1h-3z" fill="#000"/></svg></div></div>
<div class="cb" style="left:355px;top:147px;width:142px"><div class="clip"><div class="tx" id="c4" style="left:0;top:0;transform:scaleX(0.8500);">0 - * - Programmunabhängig</div></div><div class="dd"></div></div>
<div class="gb" style="left:524px;top:107px;width:68px;height:66px"></div>
<div class="btn" style="left:531px;top:144px;width:53px;height:24px"><div class="t" id="alt" style="left:3px;top:4px;transform:scaleX(0.8834);">Alternativ</div>
</div>
<div class="btn" style="left:598px;top:101px;width:72px;height:73px"><div class="t" id="v1" style="left:3px;top:9px;transform:scaleX(0.8810);">Varianten-</div>
<div class="t" id="v2" style="left:3px;top:22px;transform:scaleX(0.8820);">änderungen</div>
<div class="t" id="v3" style="left:3px;top:35px;transform:scaleX(0.8897);">auch grafisch</div>
<div class="t" id="v4" style="left:3px;top:48px;transform:scaleX(0.8742);">aktualisieren</div>
</div>
<div class="a chk" style="left:677px;top:130px"></div>
<div class="t" id="k1" style="left:695px;top:103px;transform:scaleX(0.8894);">Varianten</div>
<div class="t" id="k2" style="left:695px;top:116px;transform:scaleX(0.8575);">des</div>
<div class="t" id="k3" style="left:695px;top:129px;transform:scaleX(0.8733);">selektierten</div>
<div class="t" id="k4" style="left:695px;top:142px;transform:scaleX(0.8571);">Elementes</div>
<div class="t" id="k5" style="left:695px;top:155px;transform:scaleX(0.8964);">fett anzeigen</div>
<div class="gb" style="left:7px;top:184px;width:373px;height:286px"></div>
<div class="lg" style="left:14px;top:179px;width:91px"><span id="l2" style="transform:scaleX(0.8668);">Herstellervarianten</span></div>
<div class="lb h" style="left:12px;top:193px;width:175px"><span id="hl0" style="transform:scaleX(0.8958);">402-Sockelhöhe</span></div><div class="cb r" style="left:195px;top:193px;width:170px"><div class="dd"></div></div>
<div class="lb h" style="left:12px;top:218px;width:175px"><span id="hl1" style="transform:scaleX(0.8933);">501-Farbe Regale/Borde</span></div><div class="cb r" style="left:195px;top:218px;width:170px"><div class="dd"></div></div>
<div class="lb h" style="left:12px;top:243px;width:175px"><span id="hl2" style="transform:scaleX(0.8652);">502-Ausführung Kranzprofil</span></div><div class="cb r" style="left:195px;top:243px;width:170px"><div class="dd"></div></div>
<div class="lb h" style="left:12px;top:268px;width:175px"><span id="hl3" style="transform:scaleX(0.8633);">503-Farbe Kranzprofil</span></div><div class="cb r" style="left:195px;top:268px;width:170px"><div class="dd"></div></div>
<div class="lb h" style="left:12px;top:293px;width:175px"><span id="hl4" style="transform:scaleX(0.8783);">504-Ausführung Lichtleiste</span></div><div class="cb r" style="left:195px;top:293px;width:170px"><div class="dd"></div></div>
<div class="lb h" style="left:12px;top:318px;width:175px"><span id="hl5" style="transform:scaleX(0.8835);">505-Farbe Lichtblende</span></div><div class="cb r" style="left:195px;top:318px;width:170px"><div class="dd"></div></div>
<div class="lb h" style="left:12px;top:343px;width:175px"><span id="hl6" style="transform:scaleX(0.8933);">506-Ausführung Deckenblende</span></div><div class="cb r" style="left:195px;top:343px;width:170px"><div class="tx" id="c506" style="transform:scaleX(0.8952);">50603 - Eckig</div><div class="dd"></div></div>
<div class="lb h" style="left:12px;top:368px;width:175px"><span id="hl7" style="transform:scaleX(0.8935);">507-Farbe Deckenblende</span></div><div class="cb r" style="left:195px;top:368px;width:170px"><div class="dd"></div></div>
<div class="lb h" style="left:12px;top:393px;width:175px"><span id="hl8" style="transform:scaleX(0.8670);">601-Arbeitsplatten-Farbe</span></div><div class="cb r" style="left:195px;top:393px;width:170px"><div class="dd"></div></div>
<div class="lb h" style="left:12px;top:418px;width:175px"><span id="hl9" style="transform:scaleX(0.8857);">602-Ausführung Arbeitsplattenkante</span></div><div class="cb r" style="left:195px;top:418px;width:170px"><div class="dd"></div></div>
<div class="lb h" style="left:12px;top:443px;width:175px"><span id="hl10" style="transform:scaleX(0.8777);">603-APL-Kantenfarbe</span></div><div class="cb r" style="left:195px;top:443px;width:170px"><div class="dd"></div></div>
<div id="wash"></div>
<div class="gb" style="left:392px;top:184px;width:373px;height:261px"></div>
<div class="lg" style="left:399px;top:179px;width:94px"><span id="l4" style="transform:scaleX(0.8541);">Programmvarianten</span></div>
<div class="lb" style="left:397px;top:193px;width:175px"><span id="pl0" style="transform:scaleX(0.8603);">101-Frontfarbe</span></div><div class="cb r" style="left:580px;top:193px;width:170px"><div class="dd"></div></div>
<div class="lb" style="left:397px;top:218px;width:175px"><span id="pl1" style=""></span></div><div class="cb r" style="left:580px;top:218px;width:170px"><div class="dd"></div></div>
<div class="lb" style="left:397px;top:243px;width:175px"><span id="pl2" style=""></span></div><div class="cb r" style="left:580px;top:243px;width:170px"><div class="dd"></div></div>
<div class="lb" style="left:397px;top:268px;width:175px"><span id="pl3" style=""></span></div><div class="cb r" style="left:580px;top:268px;width:170px"><div class="dd"></div></div>
<div class="lb" style="left:397px;top:293px;width:175px"><span id="pl4" style="transform:scaleX(0.8671);">202-Korpusfarbe außen</span></div><div class="cb r" style="left:580px;top:293px;width:170px"><div class="dd"></div></div>
<div class="lb" style="left:397px;top:318px;width:175px"><span id="pl5" style="transform:scaleX(0.8780);">203-Korpusfarbe innen</span></div><div class="cb r" style="left:580px;top:318px;width:170px"><div class="dd"></div></div>
<div class="lb" style="left:397px;top:343px;width:175px"><span id="pl6" style="transform:scaleX(0.8694);">207-Sichtseitenfarbe</span></div><div class="cb r" style="left:580px;top:343px;width:170px"><div class="dd"></div></div>
<div class="lb" style="left:397px;top:368px;width:175px"><span id="pl7" style="transform:scaleX(0.8665);">303-Griffausführung</span></div><div class="cb r" style="left:580px;top:368px;width:170px"><div class="dd"></div></div>
<div class="lb" style="left:397px;top:393px;width:175px"><span id="pl8" style="transform:scaleX(0.8604);">304-Grifflage</span></div><div class="cb r" style="left:580px;top:393px;width:170px"><div class="dd"></div></div>
<div class="lb" style="left:397px;top:418px;width:175px"><span id="pl9" style="transform:scaleX(0.8891);">401-Sockelfarbe</span></div><div class="cb r" style="left:580px;top:418px;width:170px"><div class="dd"></div></div>
<svg class="a" style="left:285px;top:210px" width="345" height="100" viewBox="285 210 345 100"><path d="M366.5 215.5H603.5A20 7.5 0 0 1 623.5 223V283A20 7.5 0 0 1 603.5 290.5H380L293 306.5L345.5 285V222.5A21 7 0 0 1 366.5 215.5Z" fill="#ffffe1" stroke="#000" stroke-width="1" shape-rendering="crispEdges"/></svg>
<div class="co" style="top:232px" id="M366.5 215.5H603.5A20 7.5 0 0 1 623.5 223V283A20 7.5 0 0 1 603.5 290.5H380L293 306.5L345.5 285V222.5A21 7 0 0 1 366.5 215.5Z">Beispiel!</div>
<div class="co" style="top:246px" id="M366.5 215.5H603.5A20 7.5 0 0 1 623.5 223V283A20 7.5 0 0 1 603.5 290.5H380L293 306.5L345.5 285V222.5A21 7 0 0 1 366.5 215.5Z">Es fehlen alle diese Varianten in</div>
<div class="co" style="top:260px" id="M366.5 215.5H603.5A20 7.5 0 0 1 623.5 223V283A20 7.5 0 0 1 603.5 290.5H380L293 306.5L345.5 285V222.5A21 7 0 0 1 366.5 215.5Z">der Anzeige</div>
</div>
</body>
</html>
